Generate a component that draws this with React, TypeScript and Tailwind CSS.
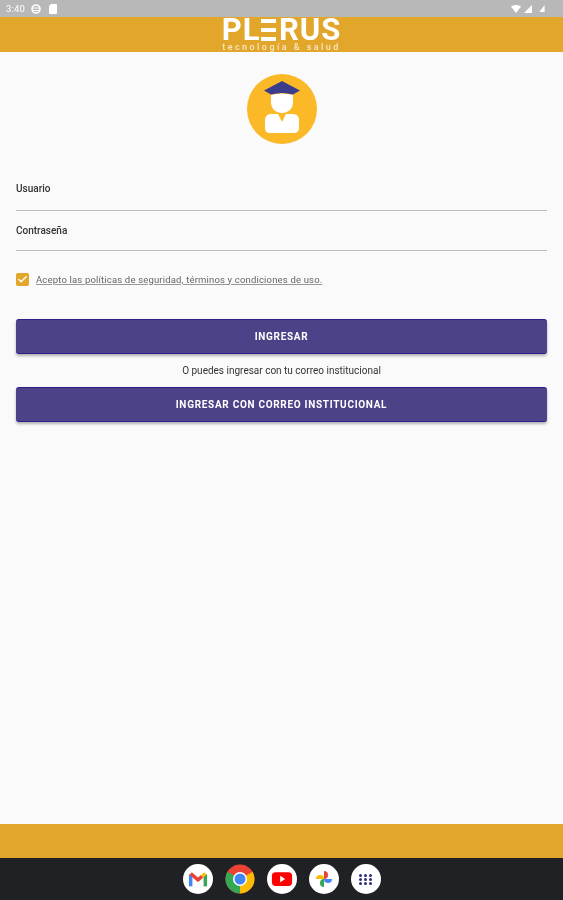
import { Check } from 'lucide-react'

const roboto = 'font-[Roboto,"Liberation_Sans",sans-serif]'

function StatusBar() {
  return (
    <div className="flex h-[17px] items-center justify-between bg-[#b8b8b8] pl-[6px] pr-[18px] text-white blur-[0.4px]">
      <div className="flex items-center gap-[6px]">
        <span className={`${roboto} text-[9.5px] leading-none tracking-[0.2px]`}>3:40</span>
        <svg viewBox="0 0 10 10" className="h-[10px] w-[10px]" fill="none" stroke="#fff" strokeWidth="1.6">
          <circle cx="5" cy="5" r="4" />
          <path d="M1 4h8M1 6.500h8" strokeWidth="1" />
        </svg>
        <svg viewBox="0 0 8 10" className="ml-[2px] h-[10px] w-[8px]" fill="#fff">
          <path d="M2 0h5a1 1 0 0 1 1 1v8a1 1 0 0 1-1 1H1a1 1 0 0 1-1-1V2z" />
        </svg>
      </div>
      <div className="flex items-center gap-[3px]">
        <svg viewBox="0 0 10 8" className="h-[8px] w-[10px]" fill="#fff">
          <path d="M0 1.500C3-.5 7-.5 10 1.500L5 8z" />
        </svg>
        <svg viewBox="0 0 8 8" className="h-[8px] w-[8px]" fill="#fff">
          <path d="M8 0v8H0z" />
        </svg>
        <svg viewBox="0 0 6 8" className="ml-[4px] h-[7px] w-[6px]" fill="#fff">
          <path d="M6 0v8H0z" />
        </svg>
      </div>
    </div>
  )
}

function Logo() {
  return (
    <div className="flex flex-col items-center text-white blur-[0.4px]">
      <div className={`${roboto} flex h-[25px] items-center text-[31px] font-bold leading-[25px] tracking-[1px]`}>
        <span>PL</span>
        <span className="relative text-transparent">
          E
          <span className="absolute left-[1px] right-[3px] top-[2px] h-[3.5px] bg-white" />
          <span className="absolute left-[1px] right-[3px] top-[11px] h-[3.5px] bg-white" />
          <span className="absolute left-[1px] right-[3px] top-[20px] h-[3.5px] bg-white" />
        </span>
        <span>RUS</span>
      </div>
      <span className={`${roboto} text-[9px] font-medium leading-[10px] tracking-[2.45px] text-[#f7e7c4]`}>
        tecnología &amp; salud
      </span>
    </div>
  )
}

function Avatar() {
  return (
    <svg viewBox="0 0 70 70" className="h-[70px] w-[70px] blur-[0.3px]">
      <circle cx="35" cy="35" r="35" fill="#fbb827" />
      <path d="M24 21Q35 18 46 21V28C46 35 41 39 35 39C29 39 24 35 24 28Z" fill="#fff" />
      <path d="M31 40 35 48 39 40H46C50 40 52 43 52 46V54C52 57 50 59 47 59H23C20 59 18 57 18 54V46C18 43 20 40 24 40Z" fill="#fff" />
      <path d="M35 7 17 16.500 24 20.500Q35 17.500 46 20.500L53 16.500Z" fill="#3c3c8c" />
    </svg>
  )
}

function Field({ label, className }: { label: string; className: string }) {
  return (
    <div className={`${className} border-b-[1.5px] border-[#bdbdbd]`}>
      <span className={`${roboto} text-[10px] font-medium leading-none text-[#333]`}>{label}</span>
    </div>
  )
}

function PurpleButton({ children }: { children: string }) {
  return (
    <button className={`${roboto} flex h-[35px] w-full items-center justify-center rounded-[3px] border-t border-b border-[#2f1f8a] bg-[#4c4288] text-[10px] font-bold tracking-[0.7px] text-white shadow-[0_2px_3px_rgba(0,0,0,0.3)]`}>
      {children}
    </button>
  )
}

function Dock({ children }: { children: React.ReactNode }) {
  return <div className="flex h-[30px] w-[30px] items-center justify-center rounded-full bg-white">{children}</div>
}

export default function App() {
  return (
    <div className="flex h-[900px] w-[563px] flex-col overflow-hidden bg-[#fafafa]">
      <StatusBar />
      <header className="flex h-[35px] items-start justify-center bg-[#e2a62a]">
        <Logo />
      </header>

      <main className="flex flex-1 flex-col px-4">
        <div className="mt-[22px] flex justify-center">
          <Avatar />
        </div>

        <div className="blur-[0.4px]">
          <Field label="Usuario" className="mt-[30px] h-[37px]" />
          <Field label="Contraseña" className="mt-[5px] h-[35px]" />

          <label className="mt-[22px] flex items-center gap-[7px]">
            <span className="flex h-[13px] w-[13px] items-center justify-center rounded-[2px] bg-[#e2a62a]">
              <Check className="h-[11px] w-[11px] text-white" strokeWidth={3} />
            </span>
            <span className={`${roboto} text-[9.5px] leading-none tracking-[0.17px] text-[#666] underline decoration-[#999]`}>
              Acepto las políticas de seguridad, términos y condiciones de uso.
            </span>
          </label>

          <div className="mt-[33px]">
            <PurpleButton>INGRESAR</PurpleButton>
          </div>
          <p className={`${roboto} my-[10px] text-center text-[10px] leading-[13px] text-[#333]`}>
            O puedes ingresar con tu correo institucional
          </p>
          <PurpleButton>INGRESAR CON CORREO INSTITUCIONAL</PurpleButton>
        </div>
      </main>

      <div className="h-[34px] bg-[#e2a62a]" />

      <nav className="flex h-[42px] items-center justify-center gap-[12px] bg-[#202124]">
        <Dock>
          <svg viewBox="0 0 24 24" className="h-[22px] w-[22px]" fill="none" strokeWidth="3.8">
            <path d="M4 20V7" stroke="#4285f4" />
            <path d="M20 20V7" stroke="#34a853" />
            <path d="M4 6 12 13 16.500 9" stroke="#ea4335" strokeLinejoin="round" />
            <path d="M20 6 16.500 9" stroke="#fbbc04" />
          </svg>
        </Dock>
        <div className="h-[30px] w-[30px]">
          <svg viewBox="0 0 30 30" className="h-[30px] w-[30px]">
            <circle cx="15" cy="15" r="14.500" fill="#ea4335" />
            <path d="M15 15 2.400 7.800A14.500 14.500 0 0 0 15 29.500z" fill="#34a853" />
            <path d="M15 15v14.500A14.500 14.500 0 0 0 27.600 7.800z" fill="#fbbc04" />
            <circle cx="15" cy="15" r="7" fill="#fff" />
            <circle cx="15" cy="15" r="5.500" fill="#4285f4" />
          </svg>
        </div>
        <Dock>
          <svg viewBox="0 0 24 24" className="h-[22px] w-[22px]">
            <rect x="1" y="4.500" width="22" height="15" rx="4" fill="#f00" />
            <path d="m10 8.500 5.500 3.500-5.500 3.500z" fill="#fff" />
          </svg>
        </Dock>
        <Dock>
          <svg viewBox="0 0 24 24" className="h-[24px] w-[24px]">
            <path d="M12 12H4a4 4 0 0 1 8 0z" fill="#fbbc04" />
            <path d="M12 12V4a4 4 0 0 1 0 8z" fill="#ea4335" />
            <path d="M12 12h8a4 4 0 0 1-8 0z" fill="#4285f4" />
            <path d="M12 12v8a4 4 0 0 1 0-8z" fill="#34a853" />
          </svg>
        </Dock>
        <Dock>
          <div className="grid grid-cols-3 gap-x-[2px] gap-y-[1px]">
            {Array.from({ length: 9 }, (_, i) => (
              <span key={i} className="h-[3px] w-[3px] rounded-full bg-[#2a2f78]" />
            ))}
          </div>
        </Dock>
      </nav>
    </div>
  )
}
